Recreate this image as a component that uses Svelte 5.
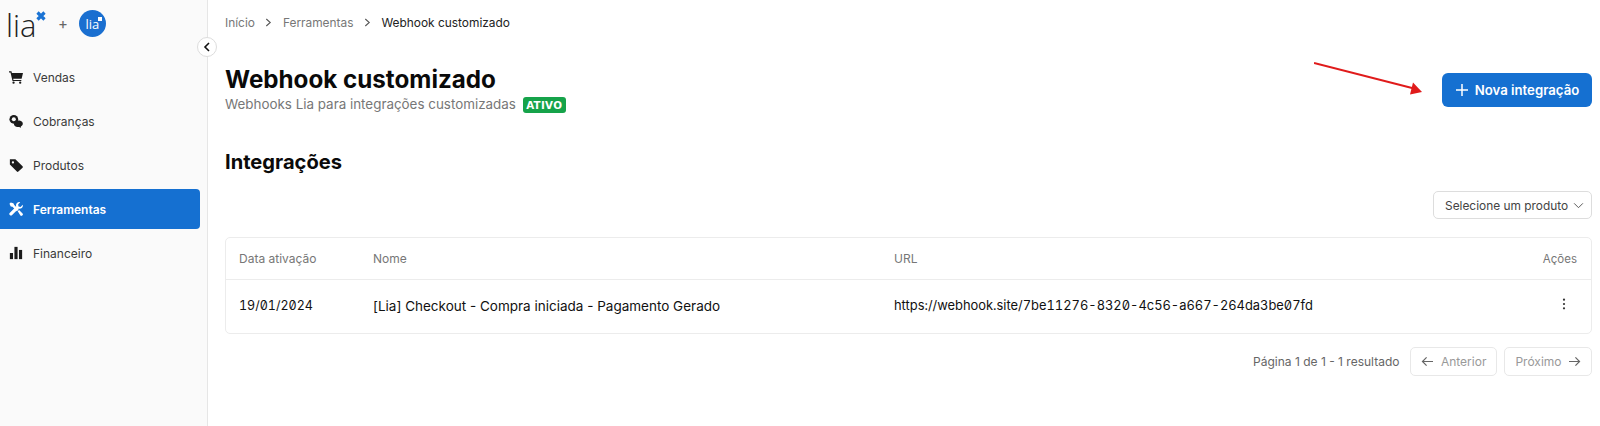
<script>
    const navItems = [
        { label: 'Vendas', icon: 'cart' },
        { label: 'Cobranças', icon: 'coins' },
        { label: 'Produtos', icon: 'tag' },
        { label: 'Ferramentas', icon: 'tools', active: true },
        { label: 'Financeiro', icon: 'bars' }
    ];
</script>

<div class="layout">
    <aside class="sidebar">
        <div class="brand">
            <span class="logo">lia<svg class="logo-x" viewBox="0 0 10 10" width="10" height="10"><path d="M1.500 1.500l7 7M8.500 1.500l-7 7" stroke="#1a73d4" stroke-width="3.200"/></svg></span>
            <span class="plus">+</span>
            <span class="avatar">lia<svg class="avatar-x" viewBox="0 0 10 10" width="4" height="4"><rect width="10" height="10" fill="#fff"/></svg></span>
        </div>
        <button class="collapse" aria-label="Recolher">
            <svg viewBox="0 0 10 14" width="8" height="12"><path d="M7.500 2L2.500 7l5 5" fill="none" stroke="#111" stroke-width="2"/></svg>
        </button>
        <nav>
            {#each navItems as item}
                <a href="#top" class="nav-item" class:active={item.active}>
                    <svg class="nav-icon" viewBox="0 0 16 16" width="14" height="14" fill="currentColor">
                        {#if item.icon === 'cart'}
                            <path d="M0 1.500h2.800l.5 2H16l-1.600 6.500H4.800l.3 1.300h9v1.400H4L1.700 2.900H0z"/>
                            <circle cx="5.200" cy="14.500" r="1.300"/>
                            <circle cx="12.800" cy="14.500" r="1.300"/>
                        {:else if item.icon === 'coins'}
                            <circle cx="5.500" cy="6" r="5"/>
                            <circle cx="5.500" cy="6" r="2.300" fill="#fafafa"/>
                            <path d="M7 8.500c1-1 3-1.500 5-1 2.500.5 4 2.200 3.800 4-.2 1.300-1.200 2.300-2.300 2.800l.3 1.500-2.200-1c-2 .2-4.200-.3-5.400-1.800C5.200 11.600 5.800 9.700 7 8.500z"/>
                        {:else if item.icon === 'tag'}
                            <path d="M1 1.500h6.300L15.500 9.300c.5.500.5 1.200 0 1.700l-4.800 4.500c-.5.500-1.200.5-1.700 0L1 7.500z"/>
                            <circle cx="4.500" cy="5" r="1.300" fill="#fafafa"/>
                        {:else if item.icon === 'tools'}
                            <path d="M2 .5L.5 2l1.500 3 2 .5 5 5 2-2-5-5L5 1.500z"/>
                            <path d="M10 10.500l1.500-1.500 4 4c.6.600.6 1.400 0 2l-.5.500c-.6.600-1.400.6-2 0z"/>
                            <path d="M15.700 3.200l-2.500 2.400-2.300-.5-.5-2.300L12.800.3C10.500-.4 8 1.200 8 3.800c0 .5.100 1 .2 1.300L1 12.200c-.9.900-.9 1.900-.1 2.700.8.800 1.900.8 2.700-.1l7.200-7.200c2.800.8 5.800-1.500 4.900-4.400z"/>
                        {:else}
                            <rect x="1" y="8" width="3.600" height="7"/>
                            <rect x="6.200" y="1" width="3.600" height="14"/>
                            <rect x="11.400" y="4.500" width="3.600" height="10.500"/>
                        {/if}
                    </svg>
                    {item.label}
                </a>
            {/each}
        </nav>
    </aside>

    <main class="content">
        <div class="breadcrumb">
            <span>Início</span>
            <svg viewBox="0 0 8 10" width="7" height="9"><path d="M1.500 1L6 5 1.500 9" fill="none" stroke="#555" stroke-width="1.200"/></svg>
            <span>Ferramentas</span>
            <svg viewBox="0 0 8 10" width="7" height="9"><path d="M1.500 1L6 5 1.500 9" fill="none" stroke="#555" stroke-width="1.200"/></svg>
            <span class="current">Webhook customizado</span>
        </div>

        <header class="page-header">
            <div>
                <h1>Webhook customizado</h1>
                <p class="subtitle">Webhooks Lia para integrações customizadas <span class="badge">ATIVO</span></p>
            </div>
            <button class="primary">
                <svg viewBox="0 0 14 14" width="14" height="14"><path d="M7 1v12M1 7h12" stroke="#fff" stroke-width="1.500"/></svg>
                Nova integração
            </button>
            <svg class="arrow" viewBox="0 0 112 34" width="112" height="34">
                <path d="M0 1L100 26.500" stroke="#e01b1b" stroke-width="2"/>
                <path d="M108 30L96 32.500 99 20.500z" fill="#e01b1b"/>
            </svg>
        </header>

        <h2>Integrações</h2>

        <div class="filter-row">
            <button class="select">
                Selecione um produto
                <svg viewBox="0 0 12 8" width="11" height="7"><path d="M1 1.500l5 5 5-5" fill="none" stroke="#555" stroke-width="1.100"/></svg>
            </button>
        </div>

        <div class="table-card">
            <table>
                <thead>
                    <tr>
                        <th class="col-date">Data ativação</th>
                        <th class="col-name">Nome</th>
                        <th>URL</th>
                        <th class="col-actions">Ações</th>
                    </tr>
                </thead>
                <tbody>
                    <tr>
                        <td class="mono">19/01/2024</td>
                        <td class="name">[Lia] Checkout - Compra iniciada - Pagamento Gerado</td>
                        <td class="mono url">https://webhook.site/7be11276-8320-4c56-a667-264da3be07fd</td>
                        <td class="col-actions">
                            <svg class="dots" viewBox="0 0 4 14" width="4" height="12" fill="#333"><circle cx="2" cy="2" r="1.300"/><circle cx="2" cy="7" r="1.300"/><circle cx="2" cy="12" r="1.300"/></svg>
                        </td>
                    </tr>
                </tbody>
            </table>
        </div>

        <div class="pagination">
            <span class="result">Página 1 de 1 - 1 resultado</span>
            <button class="page-btn">
                <svg viewBox="0 0 14 12" width="13" height="11"><path d="M13 6H1.500M6 1.500L1.500 6 6 10.500" fill="none" stroke="#666" stroke-width="1.300"/></svg>
                Anterior
            </button>
            <button class="page-btn">
                Próximo
                <svg viewBox="0 0 14 12" width="13" height="11"><path d="M1 6h11.500M8 1.500L12.500 6 8 10.500" fill="none" stroke="#666" stroke-width="1.300"/></svg>
            </button>
        </div>
    </main>
</div>

<style>
    :global(body) {
        margin: 0;
        background: #fff;
        font-family: Inter, "Liberation Sans", sans-serif;
    }
    .layout {
        display: flex;
        height: 426px;
        overflow: hidden;
    }
    .sidebar {
        position: relative;
        width: 207px;
        flex-shrink: 0;
        background: #fafafa;
        border-right: 1px solid #e6e6e6;
    }
    .brand {
        display: flex;
        align-items: center;
        height: 47px;
        padding-left: 6px;
    }
    .logo {
        position: relative;
        font-family: "Open Sans", sans-serif;
        font-size: 31px;
        font-weight: 300;
        line-height: 30px;
        color: #222;
        width: 40px;
        margin-top: 2px;
    }
    .logo-x {
        position: absolute;
        left: 30px;
        top: 1px;
    }
    .plus {
        margin-left: 12px;
        font-size: 15px;
        color: #666;
    }
    .avatar {
        position: relative;
        display: flex;
        align-items: center;
        justify-content: center;
        width: 27px;
        height: 27px;
        margin-left: 11px;
        border-radius: 50%;
        background: #1a6fd0;
        color: #fff;
        font-family: "Open Sans", sans-serif;
        font-size: 13px;
    }
    .avatar-x {
        position: absolute;
        top: 7px;
        right: 4px;
    }
    .collapse {
        position: absolute;
        top: 37px;
        left: 197px;
        display: flex;
        align-items: center;
        justify-content: center;
        width: 20px;
        height: 20px;
        padding: 0;
        background: #fff;
        border: 1px solid #ddd;
        border-radius: 50%;
    }
    nav {
        display: flex;
        flex-direction: column;
        gap: 4px;
        margin-top: 10px;
    }
    .nav-item {
        display: flex;
        align-items: center;
        gap: 10px;
        width: 200px;
        height: 40px;
        box-sizing: border-box;
        padding-left: 9px;
        color: #3a3a3a;
        font-size: 12px;
        text-decoration: none;
    }
    .nav-icon {
        color: #1b1b1b;
    }
    .nav-item.active {
        background: #1570d1;
        color: #fff;
        font-weight: 600;
        border-radius: 0 4px 4px 0;
    }
    .nav-item.active .nav-icon {
        color: #fff;
    }
    .content {
        flex: 1;
        padding: 0 8px 0 17px;
    }
    .breadcrumb {
        display: flex;
        align-items: center;
        gap: 10.500px;
        height: 44px;
        font-size: 11.900px;
        color: #777;
    }
    .current {
        color: #222;
    }
    .page-header {
        position: relative;
        display: flex;
        justify-content: space-between;
        align-items: center;
        margin-top: 22px;
    }
    h1 {
        margin: 0;
        font-size: 24.200px;
        line-height: 28px;
        font-weight: 700;
        color: #0a0a0a;
    }
    .subtitle {
        margin: 0;
        font-size: 13.400px;
        line-height: 20px;
        color: #777;
    }
    .badge {
        display: inline-block;
        margin-left: 3px;
        padding: 0 3.500px;
        background: #16a34a;
        border-radius: 3px;
        color: #fff;
        font-family: "DejaVu Sans", sans-serif;
        font-size: 10.300px;
        font-weight: 700;
        line-height: 16px;
        letter-spacing: 0.300px;
    }
    .primary {
        display: flex;
        align-items: center;
        gap: 6px;
        height: 34px;
        width: 150px;
        justify-content: center;
        background: #1570d1;
        border: 0;
        border-radius: 6px;
        color: #fff;
        font: 600 13.200px Inter, sans-serif;
    }
    .arrow {
        position: absolute;
        left: 1089px;
        top: -4px;
    }
    h2 {
        margin: 35px 0 0;
        font-size: 20.100px;
        line-height: 26px;
        font-weight: 700;
        color: #0a0a0a;
    }
    .filter-row {
        display: flex;
        justify-content: flex-end;
        margin-top: 16px;
    }
    .select {
        display: flex;
        align-items: center;
        gap: 5px;
        width: 159px;
        height: 28px;
        padding: 0 0 0 11px;
        background: #fff;
        border: 1px solid #ddd;
        border-radius: 5px;
        color: #444;
        font: 11.900px Inter, sans-serif;
    }
    .table-card {
        margin-top: 18px;
        border: 1px solid #ececec;
        border-radius: 5px;
    }
    table {
        width: 100%;
        border-collapse: collapse;
        table-layout: fixed;
    }
    th {
        height: 41px;
        padding: 0 0 0 13px;
        text-align: left;
        font-size: 12px;
        font-weight: 400;
        color: #777;
        border-bottom: 1px solid #ececec;
    }
    td {
        height: 51px;
        padding: 0 0 2px 13px;
        font-size: 12.500px;
        color: #111;
    }
    .col-date {
        width: 121px;
    }
    .col-name {
        width: 508px;
    }
    .col-actions {
        width: 80px;
        text-align: right;
        padding-right: 14px;
    }
    th.col-actions {
        font-size: 11.500px;
    }
    .dots {
        margin-right: 11px;
    }
    .mono {
        font-feature-settings: "zero", "tnum";
    }
    td.name {
        font-size: 13.500px;
    }
    td.url {
        font-size: 12.900px;
    }
    .pagination {
        display: flex;
        justify-content: flex-end;
        align-items: center;
        gap: 7px;
        margin-top: 13px;
    }
    .result {
        margin-right: 4px;
        font-size: 12px;
        color: #666;
    }
    .page-btn {
        display: flex;
        align-items: center;
        gap: 6.500px;
        height: 29px;
        padding: 0 10px;
        background: #fff;
        border: 1px solid #e8e8e8;
        border-radius: 5px;
        color: #999;
        font: 12px Inter, sans-serif;
    }
</style>
